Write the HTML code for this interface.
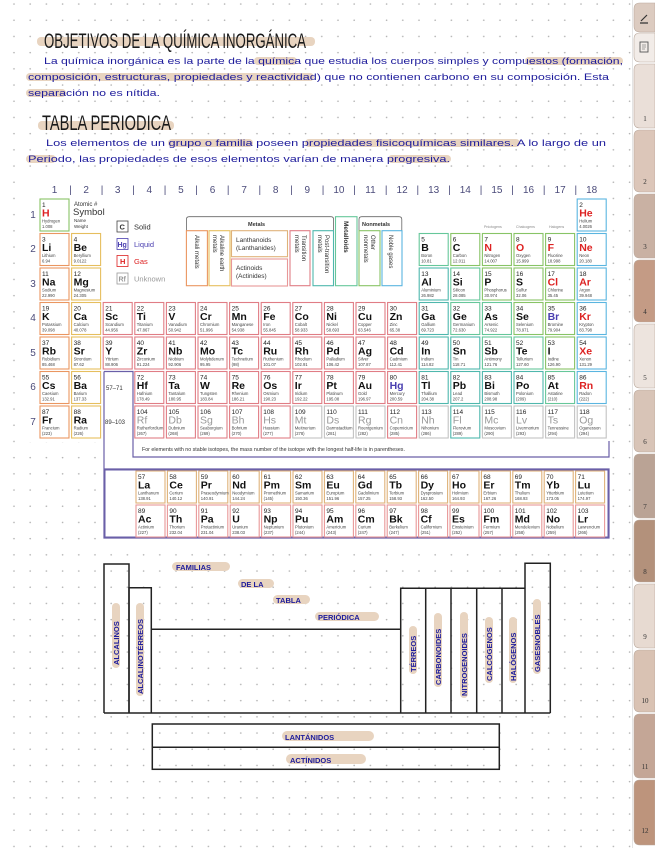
<!DOCTYPE html>
<html><head><meta charset="utf-8">
<style>
html,body{margin:0;padding:0;background:#fff;}
svg{display:block;}
.hw{font-family:"Liberation Sans",sans-serif;font-size:9.5px;fill:#1d1b9b;}
.ttl{font-family:"Liberation Sans",sans-serif;font-size:21px;fill:#1a1a1a;}
.hl{fill:#e8d4c0;}
.e rect{x:-2px;width:29px;height:32px;fill:#fff;stroke-width:1.1px;}
.e text{font-family:"Liberation Sans",sans-serif;font-size:6.5px;fill:#222;}
.e .s{font-size:10.5px;font-weight:bold;fill:#111;}
.e .m{font-size:4.2px;fill:#444;}
.e .r{fill:#d22 !important;}
.e .b{fill:#4a3fb0 !important;}
.e .u{fill:#9a9a9a !important;font-weight:normal !important;}
.am rect{stroke:#ea9660}.ae rect{stroke:#e6be5e}.tm rect{stroke:#e07d85}
.pt rect{stroke:#4fb7ad}.md rect{stroke:#66c79a}.nm rect{stroke:#88c466}
.ng rect{stroke:#5ab5e0}.la rect{stroke:#dfb27a}.ac rect{stroke:#e89898}.un rect{stroke:#c2c2c2}
.gn{font-family:"Liberation Sans",sans-serif;font-size:10px;fill:#4b4b7a;text-anchor:middle;}
.lg{font-family:"Liberation Sans",sans-serif;font-size:6.5px;fill:#333;}
.fam{font-family:"Liberation Sans",sans-serif;font-weight:bold;font-size:7.5px;fill:#1d1b9b;}
.tab{font-family:"Liberation Serif",serif;font-size:7px;fill:#333;text-anchor:middle;}
</style></head><body>
<svg width="655" height="848" viewBox="0 0 655 848" xmlns="http://www.w3.org/2000/svg">
<defs>
<pattern id="dots" patternUnits="userSpaceOnUse" width="16.2" height="16.2" x="6" y="-4">
<circle cx="8" cy="8" r="0.8" fill="#b0b0b0"/></pattern>
</defs>
<rect width="655" height="848" fill="#fff"/>
<rect width="632" height="848" fill="url(#dots)"/>
<line x1="632.5" y1="0" x2="632.5" y2="848" stroke="#e4e4e4"/>

<!-- Tabs -->
<g stroke="#b9a89c" stroke-width="0.6">
<path d="M655 3H640q-6 0-6 6V26q0 6 6 6H655z" fill="#dccbc0"/>
<path d="M655 33H640q-6 0-6 6V56q0 6 6 6H655z" fill="#f2ece8"/>
<path d="M655 64H640q-6 0-6 6V122q0 6 6 6H655z" fill="#eadfd8"/>
<path d="M655 130H640q-6 0-6 6V186q0 6 6 6H655z" fill="#dcc6b9"/>
<path d="M655 194H640q-6 0-6 6V252q0 6 6 6H655z" fill="#c9b1a3"/>
<path d="M655 260H640q-6 0-6 6V316q0 6 6 6H655z" fill="#c49b85"/>
<path d="M655 324H640q-6 0-6 6V382q0 6 6 6H655z" fill="#ede4de"/>
<path d="M655 390H640q-6 0-6 6V446q0 6 6 6H655z" fill="#d8c4b7"/>
<path d="M655 454H640q-6 0-6 6V512q0 6 6 6H655z" fill="#baa395"/>
<path d="M655 520H640q-6 0-6 6V576q0 6 6 6H655z" fill="#b3917b"/>
<path d="M655 584H640q-6 0-6 6V642q0 6 6 6H655z" fill="#e7dad1"/>
<path d="M655 650H640q-6 0-6 6V706q0 6 6 6H655z" fill="#d9c2b3"/>
<path d="M655 714H640q-6 0-6 6V772q0 6 6 6H655z" fill="#c4a696"/>
<path d="M655 780H640q-6 0-6 6V839q0 6 6 6H655z" fill="#bd947c"/>
</g>
<path d="M641 21l6-6M640 23h8" stroke="#333" stroke-width="1.2" fill="none"/>
<rect x="640" y="42" width="8" height="10" fill="none" stroke="#555" stroke-width="0.9"/>
<path d="M642 45h4M642 47h4M642 49h3" stroke="#555" stroke-width="0.6"/>
<text class="tab" x="645" y="121">1</text><text class="tab" x="645" y="184">2</text>
<text class="tab" x="645" y="249">3</text><text class="tab" x="645" y="314">4</text>
<text class="tab" x="645" y="380">5</text><text class="tab" x="645" y="444">6</text>
<text class="tab" x="645" y="509">7</text><text class="tab" x="645" y="574">8</text>
<text class="tab" x="645" y="639">9</text><text class="tab" x="645" y="703">10</text>
<text class="tab" x="645" y="769">11</text><text class="tab" x="645" y="833">12</text>

<!-- Header text -->
<rect class="hl" x="37" y="37" width="278" height="9" rx="4"/>
<text class="ttl" x="44" y="48" textLength="262" lengthAdjust="spacingAndGlyphs">OBJETIVOS DE LA QUÍMICA INORGÁNICA</text>
<rect class="hl" x="254" y="57" width="43" height="8" rx="4"/>
<rect class="hl" x="525" y="57" width="98" height="8" rx="4"/>
<rect class="hl" x="26" y="73" width="288" height="8" rx="4"/>
<rect class="hl" x="26" y="89" width="40" height="8" rx="4"/>
<text class="hw" x="44" y="64" textLength="579" lengthAdjust="spacingAndGlyphs">La química inorgánica es la parte de la química que estudia los cuerpos simples y compuestos (formación,</text>
<text class="hw" x="28" y="80" textLength="581" lengthAdjust="spacingAndGlyphs">composición, estructuras, propiedades y reactividad) que no contienen carbono en su composición. Esta</text>
<text class="hw" x="28" y="96" textLength="132" lengthAdjust="spacingAndGlyphs">separación no es nítida.</text>
<rect class="hl" x="38" y="121" width="136" height="9" rx="4"/>
<text class="ttl" x="42" y="130" textLength="129" lengthAdjust="spacingAndGlyphs">TABLA PERIODICA</text>
<rect class="hl" x="168" y="139" width="85" height="8" rx="4"/>
<rect class="hl" x="305" y="139" width="215" height="8" rx="4"/>
<rect class="hl" x="26" y="155" width="30" height="8" rx="4"/>
<rect class="hl" x="388" y="155" width="63" height="8" rx="4"/>
<text class="hw" x="46" y="146" textLength="560" lengthAdjust="spacingAndGlyphs">Los elementos de un grupo o familia poseen propiedades fisicoquímicas similares. A lo largo de un</text>
<text class="hw" x="28" y="162" textLength="422" lengthAdjust="spacingAndGlyphs">Periodo, las propiedades de esos elementos varían de manera progresiva.</text>

<!-- Periodic table background -->
<rect x="28" y="180" width="582" height="262" fill="#fff"/>
<rect x="100" y="440" width="512" height="102" fill="#fff"/>

<!-- group numbers -->
<g class="gn">
<text x="54.5" y="193">1</text><text x="86.1" y="193">2</text><text x="117.7" y="193">3</text><text x="149.3" y="193">4</text><text x="180.9" y="193">5</text><text x="212.5" y="193">6</text><text x="244.1" y="193">7</text><text x="275.7" y="193">8</text><text x="307.3" y="193">9</text><text x="338.9" y="193">10</text><text x="370.5" y="193">11</text><text x="402.1" y="193">12</text><text x="433.7" y="193">13</text><text x="465.3" y="193">14</text><text x="496.9" y="193">15</text><text x="528.5" y="193">16</text><text x="560.1" y="193">17</text><text x="591.7" y="193">18</text>
<text x="70.5" y="193">|</text><text x="102" y="193">|</text><text x="133.5" y="193">|</text><text x="165" y="193">|</text><text x="196.6" y="193">|</text><text x="228.2" y="193">|</text><text x="259.8" y="193">|</text><text x="291.4" y="193">|</text><text x="323" y="193">|</text><text x="354.6" y="193">|</text><text x="386.2" y="193">|</text><text x="417.8" y="193">|</text><text x="449.4" y="193">|</text><text x="481" y="193">|</text><text x="512.6" y="193">|</text><text x="544.2" y="193">|</text><text x="575.8" y="193">|</text>
<text x="33" y="218">1</text><text x="33" y="252">2</text><text x="33" y="287">3</text><text x="33" y="321">4</text><text x="33" y="356">5</text><text x="33" y="390">6</text><text x="33" y="425">7</text>
<text x="125" y="490">6</text><text x="125" y="525">7</text>
</g>

<!-- legend -->
<g class="lg">
<text x="74" y="206" font-size="6">Atomic #</text>
<text x="73" y="215" font-size="9.5">Symbol</text>
<text x="74" y="222" font-size="4.5">Name</text>
<text x="74" y="228" font-size="4.5">Weight</text>
<rect x="117" y="221" width="11" height="11" fill="#fff" stroke="#444" stroke-width="0.8"/><text x="119.5" y="229.5" font-weight="bold" font-size="7.5">C</text><text x="134" y="229.5" font-size="7.5">Solid</text>
<rect x="117" y="238.5" width="11" height="11" fill="#fff" stroke="#4a3fb0" stroke-width="0.8"/><text x="117.5" y="247" font-weight="bold" font-size="7" fill="#4a3fb0">Hg</text><text x="134" y="247" font-size="7.5" fill="#4a3fb0">Liquid</text>
<rect x="117" y="255.5" width="11" height="11" fill="#fff" stroke="#d22" stroke-width="0.8"/><text x="120" y="264" font-weight="bold" font-size="7.5" fill="#d22">H</text><text x="134" y="264" font-size="7.5" fill="#d22">Gas</text>
<rect x="117" y="273" width="11" height="11" fill="#fff" stroke="#999" stroke-width="0.8"/><text x="118.5" y="281.5" font-weight="bold" font-size="7" fill="#999">Rf</text><text x="134" y="281.5" font-size="7.5" fill="#999">Unknown</text>
<path d="M186.4 231V219.5q0-2.8 2.8-2.8H331q2.6 0 2.6 2.8V231" fill="none" stroke="#666" stroke-width="0.8"/>
<path d="M359 231V219.5q0-2.8 2.8-2.8H399q2.8 0 2.8 2.8V231" fill="none" stroke="#666" stroke-width="0.8"/>
<text x="248" y="226" font-weight="bold" font-size="5.5">Metals</text>
<text x="362" y="226" font-weight="bold" font-size="5.5">Nonmetals</text>
<g fill="#fff" stroke-width="1.1">
<rect x="186.4" y="230.7" width="21" height="55" stroke="#ea9660"/>
<rect x="209" y="230.7" width="21" height="55" stroke="#e6be5e"/>
<rect x="231.5" y="230.7" width="56" height="26" stroke="#dfb27a"/>
<rect x="231.5" y="259" width="56" height="27" stroke="#e89898"/>
<rect x="290" y="230.7" width="20" height="55" stroke="#e07d85"/>
<rect x="313" y="230.7" width="20.5" height="55" stroke="#4fb7ad"/>
<rect x="335.5" y="216.7" width="21.5" height="69" stroke="#66c79a"/>
<rect x="359" y="230.7" width="21" height="55" stroke="#88c466"/>
<rect x="382" y="230.7" width="20" height="55" stroke="#5ab5e0"/>
</g>
<text x="236" y="242" font-size="6.5">Lanthanoids</text><text x="236" y="250" font-size="6.5">(Lanthanides)</text>
<text x="236" y="270" font-size="6.5">Actinoids</text><text x="236" y="278" font-size="6.5">(Actinides)</text>
<text transform="translate(195,235) rotate(90)" font-size="6">Alkali metals</text>
<text transform="translate(220,235) rotate(90)" font-size="6">Alkaline earth</text>
<text transform="translate(213,235) rotate(90)" font-size="6">metals</text>
<text transform="translate(302,235) rotate(90)" font-size="6">Transition</text>
<text transform="translate(295,235) rotate(90)" font-size="6">metals</text>
<text transform="translate(325,235) rotate(90)" font-size="6">Post-transition</text>
<text transform="translate(318,235) rotate(90)" font-size="6">metals</text>
<text transform="translate(344,221) rotate(90)" font-size="6.5" font-weight="bold">Metalloids</text>
<text transform="translate(371,235) rotate(90)" font-size="6">Other</text>
<text transform="translate(364,235) rotate(90)" font-size="6">nonmetals</text>
<text transform="translate(389,235) rotate(90)" font-size="6">Noble gases</text>
<text x="484" y="228" font-size="3.6" fill="#888">Pnictogens</text>
<text x="516" y="228" font-size="3.6" fill="#888">Chalcogens</text>
<text x="549" y="228" font-size="3.6" fill="#888">Halogens</text>
</g>

<!-- Purple outlines -->
<g fill="none" stroke="#6a5fa8" stroke-width="1.2">
<path d="M104 371.5H133V457H609V441"/>
<path d="M104 371.5V538H609V469H104"/>
</g>
<rect x="105" y="470" width="503" height="67" fill="#fff"/>
<rect x="105" y="470" width="503" height="67" fill="none" stroke="#6a5fa8" stroke-width="1"/>
<text x="106" y="390" font-family="Liberation Sans" font-size="6" fill="#333">57–71</text>
<text x="105" y="424" font-family="Liberation Sans" font-size="6" fill="#333">89–103</text>
<text x="142" y="451" font-family="Liberation Sans" font-size="5.3" fill="#333">For elements with no stable isotopes, the mass number of the isotope with the longest half-life is in parentheses.</text>

<!-- Elements -->
<g class="e nm" transform="translate(42,199)"><rect/><text y="8">1</text><text class="s r" y="17.5">H</text><text class="m" y="23.5">Hydrogen</text><text class="m" y="29">1.008</text></g>
<g class="e ng" transform="translate(579.2,199)"><rect/><text y="8">2</text><text class="s r" y="17.5">He</text><text class="m" y="23.5">Helium</text><text class="m" y="29">4.0026</text></g>

<g class="e am" transform="translate(42,233.5)"><rect/><text y="8">3</text><text class="s" y="17.5">Li</text><text class="m" y="23.5">Lithium</text><text class="m" y="29">6.94</text></g>
<g class="e ae" transform="translate(73.6,233.5)"><rect/><text y="8">4</text><text class="s" y="17.5">Be</text><text class="m" y="23.5">Beryllium</text><text class="m" y="29">9.0122</text></g>
<g class="e md" transform="translate(421.2,233.5)"><rect/><text y="8">5</text><text class="s" y="17.5">B</text><text class="m" y="23.5">Boron</text><text class="m" y="29">10.81</text></g>
<g class="e nm" transform="translate(452.8,233.5)"><rect/><text y="8">6</text><text class="s" y="17.5">C</text><text class="m" y="23.5">Carbon</text><text class="m" y="29">12.011</text></g>
<g class="e nm" transform="translate(484.4,233.5)"><rect/><text y="8">7</text><text class="s r" y="17.5">N</text><text class="m" y="23.5">Nitrogen</text><text class="m" y="29">14.007</text></g>
<g class="e nm" transform="translate(516,233.5)"><rect/><text y="8">8</text><text class="s r" y="17.5">O</text><text class="m" y="23.5">Oxygen</text><text class="m" y="29">15.999</text></g>
<g class="e nm" transform="translate(547.6,233.5)"><rect/><text y="8">9</text><text class="s r" y="17.5">F</text><text class="m" y="23.5">Fluorine</text><text class="m" y="29">18.998</text></g>
<g class="e ng" transform="translate(579.2,233.5)"><rect/><text y="8">10</text><text class="s r" y="17.5">Ne</text><text class="m" y="23.5">Neon</text><text class="m" y="29">20.180</text></g>

<g class="e am" transform="translate(42,268)"><rect/><text y="8">11</text><text class="s" y="17.5">Na</text><text class="m" y="23.5">Sodium</text><text class="m" y="29">22.990</text></g>
<g class="e ae" transform="translate(73.6,268)"><rect/><text y="8">12</text><text class="s" y="17.5">Mg</text><text class="m" y="23.5">Magnesium</text><text class="m" y="29">24.305</text></g>
<g class="e pt" transform="translate(421.2,268)"><rect/><text y="8">13</text><text class="s" y="17.5">Al</text><text class="m" y="23.5">Aluminium</text><text class="m" y="29">26.982</text></g>
<g class="e md" transform="translate(452.8,268)"><rect/><text y="8">14</text><text class="s" y="17.5">Si</text><text class="m" y="23.5">Silicon</text><text class="m" y="29">28.085</text></g>
<g class="e nm" transform="translate(484.4,268)"><rect/><text y="8">15</text><text class="s" y="17.5">P</text><text class="m" y="23.5">Phosphorus</text><text class="m" y="29">30.974</text></g>
<g class="e nm" transform="translate(516,268)"><rect/><text y="8">16</text><text class="s" y="17.5">S</text><text class="m" y="23.5">Sulfur</text><text class="m" y="29">32.06</text></g>
<g class="e nm" transform="translate(547.6,268)"><rect/><text y="8">17</text><text class="s r" y="17.5">Cl</text><text class="m" y="23.5">Chlorine</text><text class="m" y="29">35.45</text></g>
<g class="e ng" transform="translate(579.2,268)"><rect/><text y="8">18</text><text class="s r" y="17.5">Ar</text><text class="m" y="23.5">Argon</text><text class="m" y="29">39.948</text></g>

<g class="e am" transform="translate(42,302.5)"><rect/><text y="8">19</text><text class="s" y="17.5">K</text><text class="m" y="23.5">Potassium</text><text class="m" y="29">39.098</text></g>
<g class="e ae" transform="translate(73.6,302.5)"><rect/><text y="8">20</text><text class="s" y="17.5">Ca</text><text class="m" y="23.5">Calcium</text><text class="m" y="29">40.078</text></g>
<g class="e tm" transform="translate(105.2,302.5)"><rect/><text y="8">21</text><text class="s" y="17.5">Sc</text><text class="m" y="23.5">Scandium</text><text class="m" y="29">44.956</text></g>
<g class="e tm" transform="translate(136.8,302.5)"><rect/><text y="8">22</text><text class="s" y="17.5">Ti</text><text class="m" y="23.5">Titanium</text><text class="m" y="29">47.867</text></g>
<g class="e tm" transform="translate(168.4,302.5)"><rect/><text y="8">23</text><text class="s" y="17.5">V</text><text class="m" y="23.5">Vanadium</text><text class="m" y="29">50.942</text></g>
<g class="e tm" transform="translate(200,302.5)"><rect/><text y="8">24</text><text class="s" y="17.5">Cr</text><text class="m" y="23.5">Chromium</text><text class="m" y="29">51.996</text></g>
<g class="e tm" transform="translate(231.6,302.5)"><rect/><text y="8">25</text><text class="s" y="17.5">Mn</text><text class="m" y="23.5">Manganese</text><text class="m" y="29">54.938</text></g>
<g class="e tm" transform="translate(263.2,302.5)"><rect/><text y="8">26</text><text class="s" y="17.5">Fe</text><text class="m" y="23.5">Iron</text><text class="m" y="29">55.845</text></g>
<g class="e tm" transform="translate(294.8,302.5)"><rect/><text y="8">27</text><text class="s" y="17.5">Co</text><text class="m" y="23.5">Cobalt</text><text class="m" y="29">58.933</text></g>
<g class="e tm" transform="translate(326.4,302.5)"><rect/><text y="8">28</text><text class="s" y="17.5">Ni</text><text class="m" y="23.5">Nickel</text><text class="m" y="29">58.693</text></g>
<g class="e tm" transform="translate(358,302.5)"><rect/><text y="8">29</text><text class="s" y="17.5">Cu</text><text class="m" y="23.5">Copper</text><text class="m" y="29">63.546</text></g>
<g class="e tm" transform="translate(389.6,302.5)"><rect/><text y="8">30</text><text class="s" y="17.5">Zn</text><text class="m" y="23.5">Zinc</text><text class="m" y="29">65.38</text></g>
<g class="e pt" transform="translate(421.2,302.5)"><rect/><text y="8">31</text><text class="s" y="17.5">Ga</text><text class="m" y="23.5">Gallium</text><text class="m" y="29">69.723</text></g>
<g class="e md" transform="translate(452.8,302.5)"><rect/><text y="8">32</text><text class="s" y="17.5">Ge</text><text class="m" y="23.5">Germanium</text><text class="m" y="29">72.630</text></g>
<g class="e md" transform="translate(484.4,302.5)"><rect/><text y="8">33</text><text class="s" y="17.5">As</text><text class="m" y="23.5">Arsenic</text><text class="m" y="29">74.922</text></g>
<g class="e nm" transform="translate(516,302.5)"><rect/><text y="8">34</text><text class="s" y="17.5">Se</text><text class="m" y="23.5">Selenium</text><text class="m" y="29">78.971</text></g>
<g class="e nm" transform="translate(547.6,302.5)"><rect/><text y="8">35</text><text class="s b" y="17.5">Br</text><text class="m" y="23.5">Bromine</text><text class="m" y="29">79.904</text></g>
<g class="e ng" transform="translate(579.2,302.5)"><rect/><text y="8">36</text><text class="s r" y="17.5">Kr</text><text class="m" y="23.5">Krypton</text><text class="m" y="29">83.798</text></g>

<g class="e am" transform="translate(42,337)"><rect/><text y="8">37</text><text class="s" y="17.5">Rb</text><text class="m" y="23.5">Rubidium</text><text class="m" y="29">85.468</text></g>
<g class="e ae" transform="translate(73.6,337)"><rect/><text y="8">38</text><text class="s" y="17.5">Sr</text><text class="m" y="23.5">Strontium</text><text class="m" y="29">87.62</text></g>
<g class="e tm" transform="translate(105.2,337)"><rect/><text y="8">39</text><text class="s" y="17.5">Y</text><text class="m" y="23.5">Yttrium</text><text class="m" y="29">88.906</text></g>
<g class="e tm" transform="translate(136.8,337)"><rect/><text y="8">40</text><text class="s" y="17.5">Zr</text><text class="m" y="23.5">Zirconium</text><text class="m" y="29">91.224</text></g>
<g class="e tm" transform="translate(168.4,337)"><rect/><text y="8">41</text><text class="s" y="17.5">Nb</text><text class="m" y="23.5">Niobium</text><text class="m" y="29">92.906</text></g>
<g class="e tm" transform="translate(200,337)"><rect/><text y="8">42</text><text class="s" y="17.5">Mo</text><text class="m" y="23.5">Molybdenum</text><text class="m" y="29">95.95</text></g>
<g class="e tm" transform="translate(231.6,337)"><rect/><text y="8">43</text><text class="s" y="17.5">Tc</text><text class="m" y="23.5">Technetium</text><text class="m" y="29">(98)</text></g>
<g class="e tm" transform="translate(263.2,337)"><rect/><text y="8">44</text><text class="s" y="17.5">Ru</text><text class="m" y="23.5">Ruthenium</text><text class="m" y="29">101.07</text></g>
<g class="e tm" transform="translate(294.8,337)"><rect/><text y="8">45</text><text class="s" y="17.5">Rh</text><text class="m" y="23.5">Rhodium</text><text class="m" y="29">102.91</text></g>
<g class="e tm" transform="translate(326.4,337)"><rect/><text y="8">46</text><text class="s" y="17.5">Pd</text><text class="m" y="23.5">Palladium</text><text class="m" y="29">106.42</text></g>
<g class="e tm" transform="translate(358,337)"><rect/><text y="8">47</text><text class="s" y="17.5">Ag</text><text class="m" y="23.5">Silver</text><text class="m" y="29">107.87</text></g>
<g class="e tm" transform="translate(389.6,337)"><rect/><text y="8">48</text><text class="s" y="17.5">Cd</text><text class="m" y="23.5">Cadmium</text><text class="m" y="29">112.41</text></g>
<g class="e pt" transform="translate(421.2,337)"><rect/><text y="8">49</text><text class="s" y="17.5">In</text><text class="m" y="23.5">Indium</text><text class="m" y="29">114.82</text></g>
<g class="e pt" transform="translate(452.8,337)"><rect/><text y="8">50</text><text class="s" y="17.5">Sn</text><text class="m" y="23.5">Tin</text><text class="m" y="29">118.71</text></g>
<g class="e md" transform="translate(484.4,337)"><rect/><text y="8">51</text><text class="s" y="17.5">Sb</text><text class="m" y="23.5">Antimony</text><text class="m" y="29">121.76</text></g>
<g class="e md" transform="translate(516,337)"><rect/><text y="8">52</text><text class="s" y="17.5">Te</text><text class="m" y="23.5">Tellurium</text><text class="m" y="29">127.60</text></g>
<g class="e nm" transform="translate(547.6,337)"><rect/><text y="8">53</text><text class="s" y="17.5">I</text><text class="m" y="23.5">Iodine</text><text class="m" y="29">126.90</text></g>
<g class="e ng" transform="translate(579.2,337)"><rect/><text y="8">54</text><text class="s r" y="17.5">Xe</text><text class="m" y="23.5">Xenon</text><text class="m" y="29">131.29</text></g>

<g class="e am" transform="translate(42,371.5)"><rect/><text y="8">55</text><text class="s" y="17.5">Cs</text><text class="m" y="23.5">Caesium</text><text class="m" y="29">132.91</text></g>
<g class="e ae" transform="translate(73.6,371.5)"><rect/><text y="8">56</text><text class="s" y="17.5">Ba</text><text class="m" y="23.5">Barium</text><text class="m" y="29">137.33</text></g>
<g class="e tm" transform="translate(136.8,371.5)"><rect/><text y="8">72</text><text class="s" y="17.5">Hf</text><text class="m" y="23.5">Hafnium</text><text class="m" y="29">178.49</text></g>
<g class="e tm" transform="translate(168.4,371.5)"><rect/><text y="8">73</text><text class="s" y="17.5">Ta</text><text class="m" y="23.5">Tantalum</text><text class="m" y="29">180.95</text></g>
<g class="e tm" transform="translate(200,371.5)"><rect/><text y="8">74</text><text class="s" y="17.5">W</text><text class="m" y="23.5">Tungsten</text><text class="m" y="29">183.84</text></g>
<g class="e tm" transform="translate(231.6,371.5)"><rect/><text y="8">75</text><text class="s" y="17.5">Re</text><text class="m" y="23.5">Rhenium</text><text class="m" y="29">186.21</text></g>
<g class="e tm" transform="translate(263.2,371.5)"><rect/><text y="8">76</text><text class="s" y="17.5">Os</text><text class="m" y="23.5">Osmium</text><text class="m" y="29">190.23</text></g>
<g class="e tm" transform="translate(294.8,371.5)"><rect/><text y="8">77</text><text class="s" y="17.5">Ir</text><text class="m" y="23.5">Iridium</text><text class="m" y="29">192.22</text></g>
<g class="e tm" transform="translate(326.4,371.5)"><rect/><text y="8">78</text><text class="s" y="17.5">Pt</text><text class="m" y="23.5">Platinum</text><text class="m" y="29">195.08</text></g>
<g class="e tm" transform="translate(358,371.5)"><rect/><text y="8">79</text><text class="s" y="17.5">Au</text><text class="m" y="23.5">Gold</text><text class="m" y="29">196.97</text></g>
<g class="e tm" transform="translate(389.6,371.5)"><rect/><text y="8">80</text><text class="s b" y="17.5">Hg</text><text class="m" y="23.5">Mercury</text><text class="m" y="29">200.59</text></g>
<g class="e pt" transform="translate(421.2,371.5)"><rect/><text y="8">81</text><text class="s" y="17.5">Tl</text><text class="m" y="23.5">Thallium</text><text class="m" y="29">204.38</text></g>
<g class="e pt" transform="translate(452.8,371.5)"><rect/><text y="8">82</text><text class="s" y="17.5">Pb</text><text class="m" y="23.5">Lead</text><text class="m" y="29">207.2</text></g>
<g class="e pt" transform="translate(484.4,371.5)"><rect/><text y="8">83</text><text class="s" y="17.5">Bi</text><text class="m" y="23.5">Bismuth</text><text class="m" y="29">208.98</text></g>
<g class="e pt" transform="translate(516,371.5)"><rect/><text y="8">84</text><text class="s" y="17.5">Po</text><text class="m" y="23.5">Polonium</text><text class="m" y="29">(209)</text></g>
<g class="e md" transform="translate(547.6,371.5)"><rect/><text y="8">85</text><text class="s" y="17.5">At</text><text class="m" y="23.5">Astatine</text><text class="m" y="29">(210)</text></g>
<g class="e ng" transform="translate(579.2,371.5)"><rect/><text y="8">86</text><text class="s r" y="17.5">Rn</text><text class="m" y="23.5">Radon</text><text class="m" y="29">(222)</text></g>

<g class="e am" transform="translate(42,406)"><rect/><text y="8">87</text><text class="s" y="17.5">Fr</text><text class="m" y="23.5">Francium</text><text class="m" y="29">(223)</text></g>
<g class="e ae" transform="translate(73.6,406)"><rect/><text y="8">88</text><text class="s" y="17.5">Ra</text><text class="m" y="23.5">Radium</text><text class="m" y="29">(226)</text></g>
<g class="e tm" transform="translate(136.8,406)"><rect/><text y="8">104</text><text class="s u" y="17.5">Rf</text><text class="m" y="23.5">Rutherfordium</text><text class="m" y="29">(267)</text></g>
<g class="e tm" transform="translate(168.4,406)"><rect/><text y="8">105</text><text class="s u" y="17.5">Db</text><text class="m" y="23.5">Dubnium</text><text class="m" y="29">(268)</text></g>
<g class="e tm" transform="translate(200,406)"><rect/><text y="8">106</text><text class="s u" y="17.5">Sg</text><text class="m" y="23.5">Seaborgium</text><text class="m" y="29">(269)</text></g>
<g class="e tm" transform="translate(231.6,406)"><rect/><text y="8">107</text><text class="s u" y="17.5">Bh</text><text class="m" y="23.5">Bohrium</text><text class="m" y="29">(270)</text></g>
<g class="e tm" transform="translate(263.2,406)"><rect/><text y="8">108</text><text class="s u" y="17.5">Hs</text><text class="m" y="23.5">Hassium</text><text class="m" y="29">(277)</text></g>
<g class="e un" transform="translate(294.8,406)"><rect/><text y="8">109</text><text class="s u" y="17.5">Mt</text><text class="m" y="23.5">Meitnerium</text><text class="m" y="29">(278)</text></g>
<g class="e un" transform="translate(326.4,406)"><rect/><text y="8">110</text><text class="s u" y="17.5">Ds</text><text class="m" y="23.5">Darmstadtium</text><text class="m" y="29">(281)</text></g>
<g class="e un" transform="translate(358,406)"><rect/><text y="8">111</text><text class="s u" y="17.5">Rg</text><text class="m" y="23.5">Roentgenium</text><text class="m" y="29">(282)</text></g>
<g class="e tm" transform="translate(389.6,406)"><rect/><text y="8">112</text><text class="s u" y="17.5">Cn</text><text class="m" y="23.5">Copernicium</text><text class="m" y="29">(285)</text></g>
<g class="e un" transform="translate(421.2,406)"><rect/><text y="8">113</text><text class="s u" y="17.5">Nh</text><text class="m" y="23.5">Nihonium</text><text class="m" y="29">(286)</text></g>
<g class="e pt" transform="translate(452.8,406)"><rect/><text y="8">114</text><text class="s u" y="17.5">Fl</text><text class="m" y="23.5">Flerovium</text><text class="m" y="29">(289)</text></g>
<g class="e un" transform="translate(484.4,406)"><rect/><text y="8">115</text><text class="s u" y="17.5">Mc</text><text class="m" y="23.5">Moscovium</text><text class="m" y="29">(290)</text></g>
<g class="e un" transform="translate(516,406)"><rect/><text y="8">116</text><text class="s u" y="17.5">Lv</text><text class="m" y="23.5">Livermorium</text><text class="m" y="29">(293)</text></g>
<g class="e un" transform="translate(547.6,406)"><rect/><text y="8">117</text><text class="s u" y="17.5">Ts</text><text class="m" y="23.5">Tennessine</text><text class="m" y="29">(294)</text></g>
<g class="e un" transform="translate(579.2,406)"><rect/><text y="8">118</text><text class="s u" y="17.5">Og</text><text class="m" y="23.5">Oganesson</text><text class="m" y="29">(294)</text></g>

<!-- Lanthanides -->
<g class="e la" transform="translate(138,471)"><rect/><text y="8">57</text><text class="s" y="17.5">La</text><text class="m" y="23.5">Lanthanum</text><text class="m" y="29">138.91</text></g>
<g class="e la" transform="translate(169.4,471)"><rect/><text y="8">58</text><text class="s" y="17.5">Ce</text><text class="m" y="23.5">Cerium</text><text class="m" y="29">140.12</text></g>
<g class="e la" transform="translate(200.8,471)"><rect/><text y="8">59</text><text class="s" y="17.5">Pr</text><text class="m" y="23.5">Praseodymium</text><text class="m" y="29">140.91</text></g>
<g class="e la" transform="translate(232.2,471)"><rect/><text y="8">60</text><text class="s" y="17.5">Nd</text><text class="m" y="23.5">Neodymium</text><text class="m" y="29">144.24</text></g>
<g class="e la" transform="translate(263.6,471)"><rect/><text y="8">61</text><text class="s" y="17.5">Pm</text><text class="m" y="23.5">Promethium</text><text class="m" y="29">(145)</text></g>
<g class="e la" transform="translate(295,471)"><rect/><text y="8">62</text><text class="s" y="17.5">Sm</text><text class="m" y="23.5">Samarium</text><text class="m" y="29">150.36</text></g>
<g class="e la" transform="translate(326.4,471)"><rect/><text y="8">63</text><text class="s" y="17.5">Eu</text><text class="m" y="23.5">Europium</text><text class="m" y="29">151.96</text></g>
<g class="e la" transform="translate(357.8,471)"><rect/><text y="8">64</text><text class="s" y="17.5">Gd</text><text class="m" y="23.5">Gadolinium</text><text class="m" y="29">157.25</text></g>
<g class="e la" transform="translate(389.2,471)"><rect/><text y="8">65</text><text class="s" y="17.5">Tb</text><text class="m" y="23.5">Terbium</text><text class="m" y="29">158.93</text></g>
<g class="e la" transform="translate(420.6,471)"><rect/><text y="8">66</text><text class="s" y="17.5">Dy</text><text class="m" y="23.5">Dysprosium</text><text class="m" y="29">162.50</text></g>
<g class="e la" transform="translate(452,471)"><rect/><text y="8">67</text><text class="s" y="17.5">Ho</text><text class="m" y="23.5">Holmium</text><text class="m" y="29">164.93</text></g>
<g class="e la" transform="translate(483.4,471)"><rect/><text y="8">68</text><text class="s" y="17.5">Er</text><text class="m" y="23.5">Erbium</text><text class="m" y="29">167.26</text></g>
<g class="e la" transform="translate(514.8,471)"><rect/><text y="8">69</text><text class="s" y="17.5">Tm</text><text class="m" y="23.5">Thulium</text><text class="m" y="29">168.93</text></g>
<g class="e la" transform="translate(546.2,471)"><rect/><text y="8">70</text><text class="s" y="17.5">Yb</text><text class="m" y="23.5">Ytterbium</text><text class="m" y="29">173.05</text></g>
<g class="e la" transform="translate(577.6,471)"><rect/><text y="8">71</text><text class="s" y="17.5">Lu</text><text class="m" y="23.5">Lutetium</text><text class="m" y="29">174.97</text></g>

<g class="e ac" transform="translate(138,505)"><rect/><text y="8">89</text><text class="s" y="17.5">Ac</text><text class="m" y="23.5">Actinium</text><text class="m" y="29">(227)</text></g>
<g class="e ac" transform="translate(169.4,505)"><rect/><text y="8">90</text><text class="s" y="17.5">Th</text><text class="m" y="23.5">Thorium</text><text class="m" y="29">232.04</text></g>
<g class="e ac" transform="translate(200.8,505)"><rect/><text y="8">91</text><text class="s" y="17.5">Pa</text><text class="m" y="23.5">Protactinium</text><text class="m" y="29">231.04</text></g>
<g class="e ac" transform="translate(232.2,505)"><rect/><text y="8">92</text><text class="s" y="17.5">U</text><text class="m" y="23.5">Uranium</text><text class="m" y="29">238.03</text></g>
<g class="e ac" transform="translate(263.6,505)"><rect/><text y="8">93</text><text class="s" y="17.5">Np</text><text class="m" y="23.5">Neptunium</text><text class="m" y="29">(237)</text></g>
<g class="e ac" transform="translate(295,505)"><rect/><text y="8">94</text><text class="s" y="17.5">Pu</text><text class="m" y="23.5">Plutonium</text><text class="m" y="29">(244)</text></g>
<g class="e ac" transform="translate(326.4,505)"><rect/><text y="8">95</text><text class="s" y="17.5">Am</text><text class="m" y="23.5">Americium</text><text class="m" y="29">(243)</text></g>
<g class="e ac" transform="translate(357.8,505)"><rect/><text y="8">96</text><text class="s" y="17.5">Cm</text><text class="m" y="23.5">Curium</text><text class="m" y="29">(247)</text></g>
<g class="e ac" transform="translate(389.2,505)"><rect/><text y="8">97</text><text class="s" y="17.5">Bk</text><text class="m" y="23.5">Berkelium</text><text class="m" y="29">(247)</text></g>
<g class="e ac" transform="translate(420.6,505)"><rect/><text y="8">98</text><text class="s" y="17.5">Cf</text><text class="m" y="23.5">Californium</text><text class="m" y="29">(251)</text></g>
<g class="e ac" transform="translate(452,505)"><rect/><text y="8">99</text><text class="s" y="17.5">Es</text><text class="m" y="23.5">Einsteinium</text><text class="m" y="29">(252)</text></g>
<g class="e ac" transform="translate(483.4,505)"><rect/><text y="8">100</text><text class="s" y="17.5">Fm</text><text class="m" y="23.5">Fermium</text><text class="m" y="29">(257)</text></g>
<g class="e ac" transform="translate(514.8,505)"><rect/><text y="8">101</text><text class="s" y="17.5">Md</text><text class="m" y="23.5">Mendelevium</text><text class="m" y="29">(258)</text></g>
<g class="e ac" transform="translate(546.2,505)"><rect/><text y="8">102</text><text class="s" y="17.5">No</text><text class="m" y="23.5">Nobelium</text><text class="m" y="29">(259)</text></g>
<g class="e ac" transform="translate(577.6,505)"><rect/><text y="8">103</text><text class="s" y="17.5">Lr</text><text class="m" y="23.5">Lawrencium</text><text class="m" y="29">(266)</text></g>

<!-- Bottom family diagram -->
<g fill="none" stroke="#222" stroke-width="1.5">
<path d="M104 713V564H129V713"/>
<path d="M129 713V587.7H151.3V713"/>
<path d="M151.3 629.3H400.7"/>
<path d="M104 713H550.3"/>
<path d="M400.7 713V588.3H525M425.7 588.3V713M451 588.3V713M476.7 588.3V713M502 588.3V713"/>
<path d="M525 713V563.3H550.3V713"/>
<rect x="152.3" y="724" width="347" height="45.3"/>
<path d="M152.3 747.3H499.3"/>
</g>
<g>
<rect class="hl" x="172" y="562" width="58" height="9" rx="4.5"/>
<rect class="hl" x="238" y="579" width="36" height="9" rx="4.5"/>
<rect class="hl" x="273" y="595" width="37" height="9" rx="4.5"/>
<rect class="hl" x="315" y="612" width="64" height="9" rx="4.5"/>
<rect class="hl" x="112" y="603" width="8" height="65" rx="4"/>
<rect class="hl" x="136" y="603" width="8" height="93" rx="4"/>
<rect class="hl" x="409" y="626" width="8" height="48" rx="4"/>
<rect class="hl" x="434" y="613" width="8" height="74" rx="4"/>
<rect class="hl" x="460" y="612" width="8" height="86" rx="4"/>
<rect class="hl" x="485" y="617" width="8" height="66" rx="4"/>
<rect class="hl" x="509" y="617" width="8" height="66" rx="4"/>
<rect class="hl" x="533" y="599" width="8" height="75" rx="4"/>
<rect class="hl" x="282" y="731" width="92" height="10" rx="5"/>
<rect class="hl" x="286" y="754" width="80" height="10" rx="5"/>
</g>
<text class="fam" x="176" y="570">FAMILIAS</text>
<text class="fam" x="241" y="587">DE LA</text>
<text class="fam" x="276" y="603">TABLA</text>
<text class="fam" x="318" y="620">PERIÓDICA</text>
<g class="fam" font-size="7.2">
<text transform="translate(119,665) rotate(-90)">ALCALINOS</text>
<text transform="translate(143,694) rotate(-90)">ALCALINOTÉRREOS</text>
<text transform="translate(416,672) rotate(-90)">TÉRREOS</text>
<text transform="translate(441,685) rotate(-90)">CARBONOIDES</text>
<text transform="translate(467,696) rotate(-90)">NITROGENOIDES</text>
<text transform="translate(492,681) rotate(-90)">CALCÓGENOS</text>
<text transform="translate(516,681) rotate(-90)">HALÓGENOS</text>
<text transform="translate(540,672) rotate(-90)">GASESNOBLES</text>
</g>
<text class="fam" x="285" y="740" font-size="10">LANTÁNIDOS</text>
<text class="fam" x="290" y="763" font-size="10">ACTÍNIDOS</text>
</svg>
</body></html>
